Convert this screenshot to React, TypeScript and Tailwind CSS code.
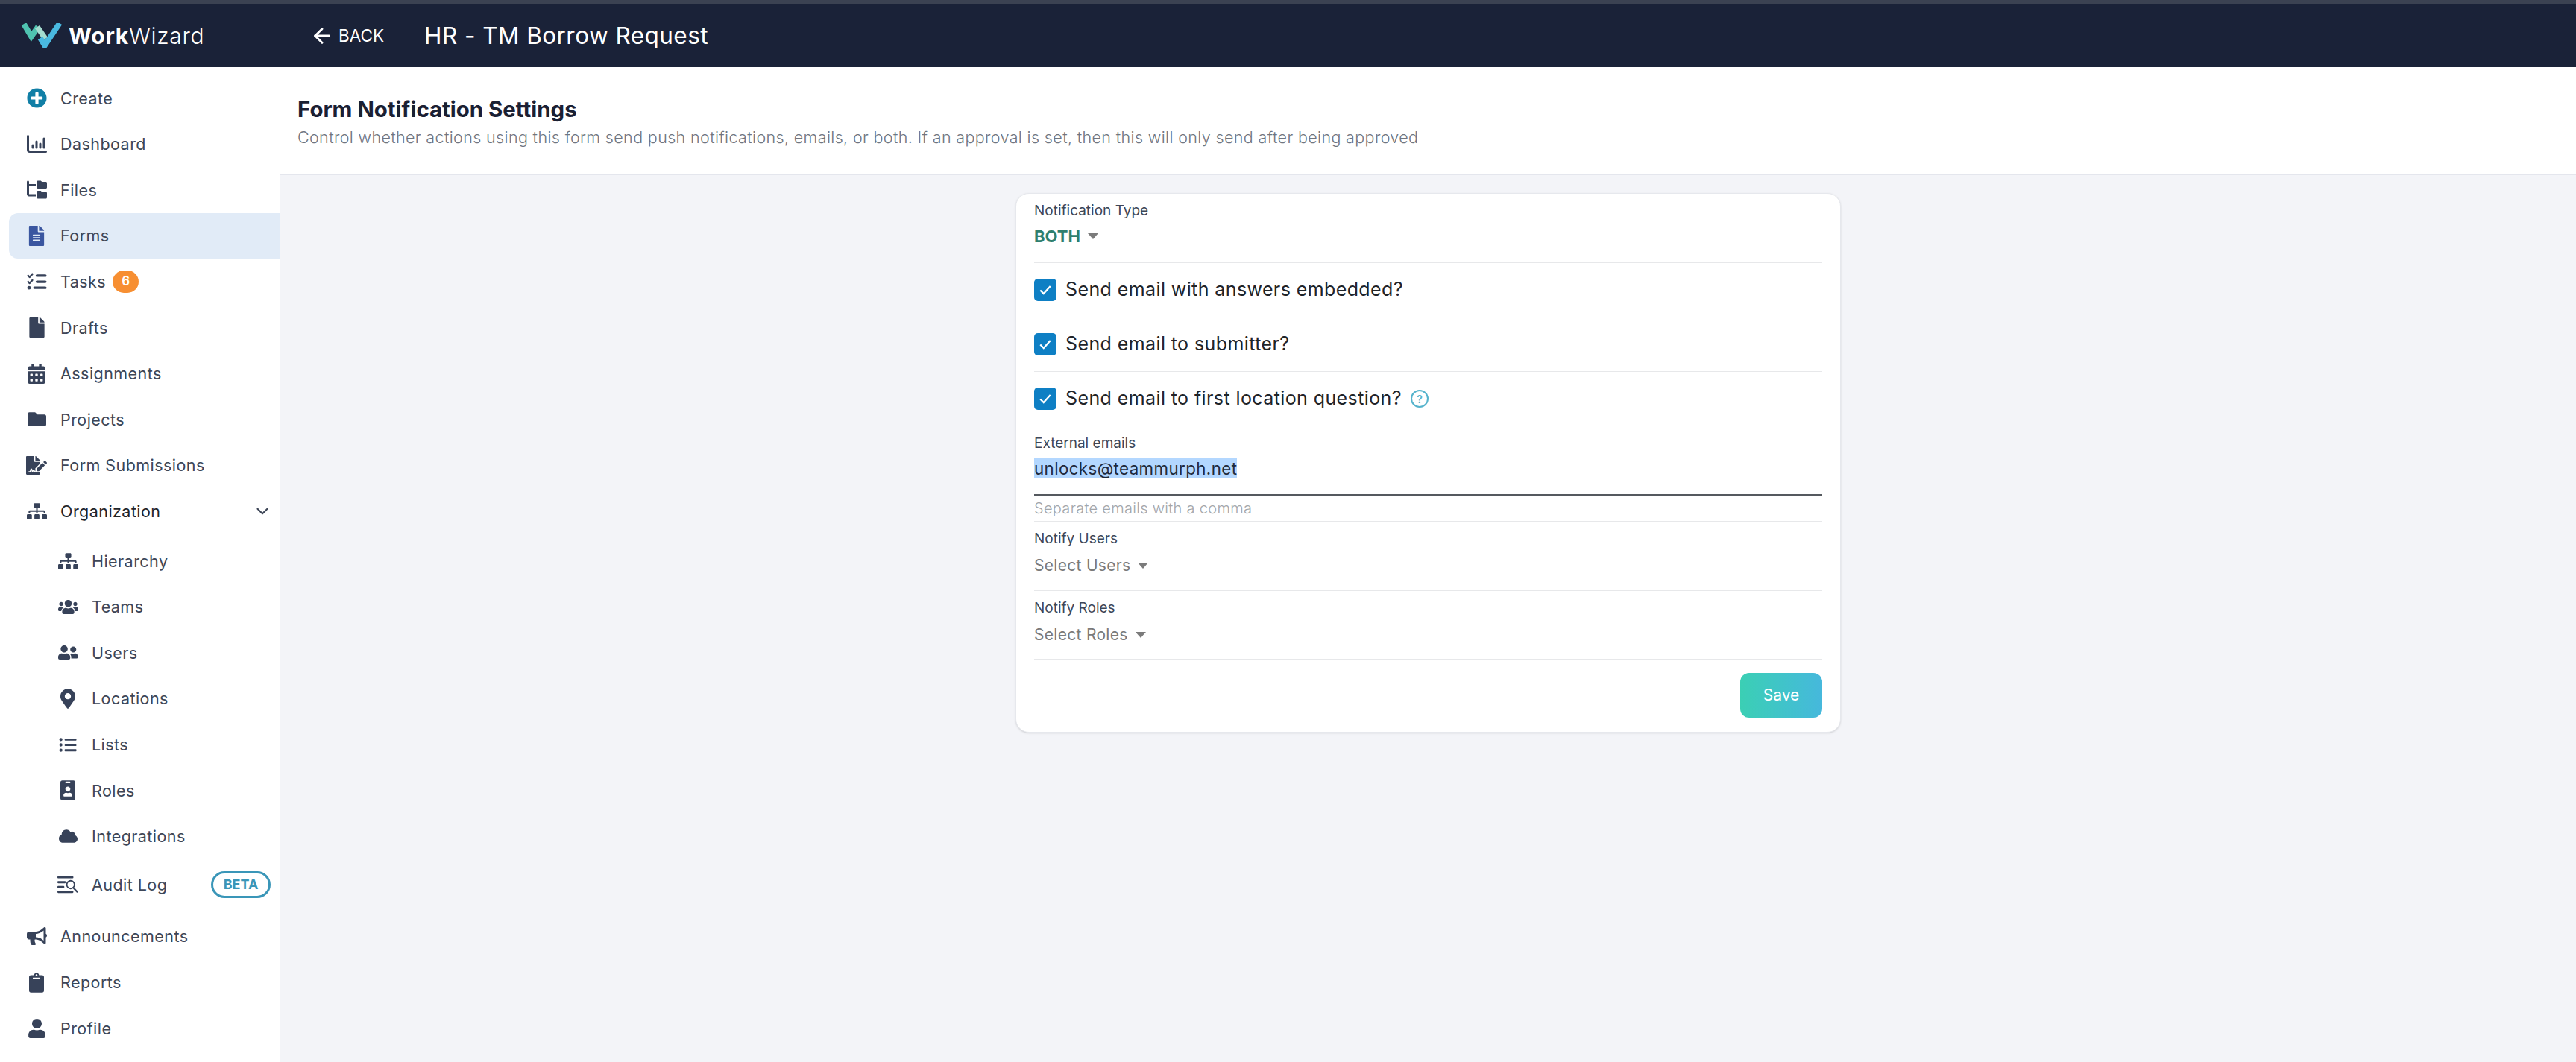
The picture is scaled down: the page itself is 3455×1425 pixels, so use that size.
import type { ReactNode } from "react";
import { ArrowLeft, ChevronDown } from "lucide-react";
import {
  FaBullhorn,
  FaCalendarAlt,
  FaClipboard,
  FaCloud,
  FaFile,
  FaFileAlt,
  FaFileSignature,
  FaFolder,
  FaIdBadge,
  FaListUl,
  FaMapMarkerAlt,
  FaPlusCircle,
  FaSitemap,
  FaUser,
  FaUserFriends,
  FaUsers,
} from "react-icons/fa";
import { FaFolderTree, FaListCheck } from "react-icons/fa6";

const font = "font-['Inter','Liberation_Sans',sans-serif]";

const ChartIcon = () => (
  <svg viewBox="0 0 27 24" className="w-[27px] h-[24px]" fill="none" stroke="#374259" strokeLinecap="round">
    <path d="M1.5 1.5 V20 Q1.5 22.5 4 22.5 H25.5" strokeWidth="3" />
    <path d="M8 14 V17" strokeWidth="3" />
    <path d="M13 9 V17" strokeWidth="3" />
    <path d="M18 12 V17" strokeWidth="3" />
    <path d="M23 5 V17" strokeWidth="3" />
  </svg>
);

const AuditIcon = () => (
  <svg viewBox="0 0 30 24" className="w-[30px] h-[24px]" fill="#374259">
    <rect x="0" y="0" width="23" height="3" rx="1.2" />
    <rect x="0" y="7" width="12" height="3" rx="1.2" />
    <rect x="0" y="14" width="10" height="3" rx="1.2" />
    <rect x="0" y="21" width="23" height="3" rx="1.2" />
    <circle cx="19" cy="12" r="5.6" fill="none" stroke="#374259" strokeWidth="2" />
    <path d="M23 16.5 L29 23" stroke="#374259" strokeWidth="2.4" />
  </svg>
);

const Logo = () => (
  <svg viewBox="0 0 56 34" className="w-[56px] h-[34px]" fill="none" strokeWidth="7.5">
    <path d="M4 1 L14 18 L23 5" stroke="#4fc3b0" />
    <path d="M22 5 L33 21" stroke="#a5dccf" />
    <path d="M26 20 L32 30 L52 0" stroke="#49b9e0" />
  </svg>
);

const Row = ({
  icon,
  label,
  active,
  sub,
  right,
  className = "",
  text = "text-[#3d4657]",
}: {
  icon: ReactNode;
  label: string;
  active?: boolean;
  sub?: boolean;
  right?: ReactNode;
  className?: string;
  text?: string;
}) => (
  <div
    className={`flex items-center h-[61.6px] shrink-0 ${sub ? "pl-[77px]" : active ? "pl-[23px]" : "pl-[35px]"} ${active ? "bg-[#e1ebf7] rounded-l-xl ml-[12px]" : ""} ${className}`}
  >
    <div className="w-[28px] h-[28px] flex items-center justify-center text-[#374259] shrink-0">
      {icon}
    </div>
    <span className={`ml-[18px] text-[21.5px] tracking-[0.45px] ${text}`}>{label}</span>
    {right}
  </div>
);

const Caret = () => (
  <span className="ml-[10px] w-0 h-0 border-x-[7px] border-x-transparent border-t-[8px] border-t-[#7b7b7b]" />
);

const CheckRow = ({ label, help }: { label: string; help?: boolean }) => (
  <div className="h-[73px] flex items-center border-b border-[#e7e8ea]">
    <div className="w-[30px] h-[30px] rounded-[5px] bg-[#0e7fc4] flex items-center justify-center">
      <svg viewBox="0 0 16 16" className="w-[18px] h-[18px]" fill="none" stroke="#fff" strokeWidth="2">
        <path d="M2 8.5 L6 12.5 L14 3.5" />
      </svg>
    </div>
    <span className="ml-[12px] text-[25px] text-[#1f2429] tracking-[0.4px]">{label}</span>
    {help && (
      <span className="ml-[12px] w-[24px] h-[24px] rounded-full border-2 border-[#55b3cc] text-[#55b3cc] text-[14px] font-semibold flex items-center justify-center">
        ?
      </span>
    )}
  </div>
);

const SelectField = ({ label, placeholder, h }: { label: string; placeholder: string; h: string }) => (
  <div className={`${h} border-b border-[#e7e8ea] pt-[10px]`}>
    <div className="text-[19px] leading-[26px] text-[#3d4657]">{label}</div>
    <div className="mt-[8px] flex items-center text-[21px] leading-[30px] text-[#7a7a7a] tracking-[0.3px]">
      {placeholder}
      <Caret />
    </div>
  </div>
);

const App = () => {
  return (
    <div className={`w-[3455px] h-[1425px] flex flex-col overflow-hidden bg-[#f3f4f8] ${font}`}>
      {/* Top bar */}
      <header className="h-[90px] shrink-0 bg-[#1a2238] border-t-[6px] border-[#3b4252] flex items-center text-white">
        <div className="w-[376px] shrink-0 pl-[28px] flex items-center">
          <Logo />
          <span className="ml-[8px] text-[30px] tracking-[0.7px]">
            <span className="font-bold">Work</span>
            <span className="font-light">Wizard</span>
          </span>
        </div>
        <div className="ml-[40px] flex items-center">
          <ArrowLeft className="w-[32px] h-[32px]" strokeWidth={2.2} />
          <span className="ml-[6px] text-[22.5px]">BACK</span>
          <span className="ml-[54px] text-[31.5px] font-normal tracking-[0.45px]">HR - TM Borrow Request</span>
        </div>
      </header>

      <div className="flex flex-1 min-h-0">
        {/* Sidebar */}
        <aside className="w-[376px] shrink-0 bg-white border-r border-[#e8eaef] pt-[11px] flex flex-col">
          <Row icon={<FaPlusCircle className="w-[27px] h-[27px] text-[#117fa6]" />} label="Create" />
          <Row icon={<ChartIcon />} label="Dashboard" />
          <Row icon={<FaFolderTree className="w-[27px] h-[27px]" />} label="Files" />
          <Row active icon={<FaFileAlt className="w-[24px] h-[27px] text-[#3a56a0]" />} label="Forms" />
          <Row
            icon={<FaListCheck className="w-[27px] h-[26px]" />}
            label="Tasks"
            right={
              <span className="ml-[9px] w-[35px] h-[30px] rounded-full bg-[#f78f32] text-white text-[17px] font-semibold flex items-center justify-center">
                6
              </span>
            }
          />
          <Row icon={<FaFile className="w-[21px] h-[27px]" />} label="Drafts" />
          <Row icon={<FaCalendarAlt className="w-[24px] h-[27px]" />} label="Assignments" />
          <Row icon={<FaFolder className="w-[27px] h-[25px]" />} label="Projects" />
          <Row icon={<FaFileSignature className="w-[28px] h-[25px]" />} label="Form Submissions" />
          <Row
            icon={<FaSitemap className="w-[27px] h-[22px]" />}
            label="Organization"
            text="text-[#1f2429]"
            className="justify-start relative mb-[5px]"
            right={<ChevronDown className="absolute right-[10px] w-[26px] h-[26px] text-[#3d4657]" strokeWidth={2} />}
          />
          <Row sub icon={<FaSitemap className="w-[27px] h-[22px]" />} label="Hierarchy" />
          <Row sub icon={<FaUsers className="w-[27px] h-[23px]" />} label="Teams" />
          <Row sub icon={<FaUserFriends className="w-[27px] h-[23px]" />} label="Users" />
          <Row sub icon={<FaMapMarkerAlt className="w-[20px] h-[27px]" />} label="Locations" />
          <Row sub icon={<FaListUl className="w-[26px] h-[23px]" />} label="Lists" />
          <Row sub icon={<FaIdBadge className="w-[20px] h-[27px]" />} label="Roles" />
          <Row sub icon={<FaCloud className="w-[27px] h-[20px]" />} label="Integrations" />
          <Row
            sub
            icon={<AuditIcon />}
            label="Audit Log"
            className="relative mb-[8px] mt-[3px]"
            right={
              <span className="absolute right-[12px] w-[80px] h-[36px] rounded-full border-[3px] border-[#3a96b8] text-[#3a96b8] text-[18px] font-bold flex items-center justify-center">
                BETA
              </span>
            }
          />
          <Row icon={<FaBullhorn className="w-[27px] h-[26px]" />} label="Announcements" />
          <Row icon={<FaClipboard className="w-[20px] h-[27px]" />} label="Reports" />
          <Row icon={<FaUser className="w-[23px] h-[26px]" />} label="Profile" />
        </aside>

        {/* Main */}
        <main className="flex-1 min-w-0">
          <div className="h-[145px] bg-white border-b border-[#e4e6ed] pl-[23px] pt-[40px]">
            <h1 className="text-[29.4px] leading-[34px] font-bold text-[#1a2033]">Form Notification Settings</h1>
            <p className="mt-[5px] text-[21.5px] leading-[30px] font-light tracking-[0.36px] text-[#6f7580]">
              Control whether actions using this form send push notifications, emails, or both. If an approval is set,
              then this will only send after being approved
            </p>
          </div>

          <div className="pt-[24px] flex justify-center">
            <div className="w-[1107px] h-[724px] bg-white rounded-[18px] border border-[#e6e8ed] shadow-sm px-[24px]">
              <div className="h-[93px] border-b border-[#e7e8ea] pt-[10px]">
                <div className="text-[19px] leading-[26px] text-[#3d4657]">Notification Type</div>
                <div className="mt-[6px] flex items-center text-[22px] leading-[30px] font-bold text-[#2f7f6f]">
                  BOTH
                  <Caret />
                </div>
              </div>
              <CheckRow label="Send email with answers embedded?" />
              <CheckRow label="Send email to submitter?" />
              <CheckRow label="Send email to first location question?" help />
              <div className="h-[128px] border-b border-[#e7e8ea] pt-[10px]">
                <div className="text-[19px] leading-[26px] text-[#3d4657]">External emails</div>
                <div className="mt-[7px] h-[50px] border-b-2 border-[#55595f] text-[22.3px] leading-[28px] text-[#1f2a3c]">
                  <span className="bg-[#b3d7ff] tracking-[0.4px]">unlocks@teammurph.net</span>
                </div>
                <div className="mt-[4px] text-[20px] leading-[26px] tracking-[0.3px] text-[#a3a6aa] font-light">
                  Separate emails with a comma
                </div>
              </div>
              <SelectField label="Notify Users" placeholder="Select Users" h="h-[93px]" />
              <SelectField label="Notify Roles" placeholder="Select Roles" h="h-[92px]" />
              <div className="flex justify-end pt-[18px]">
                <button className="w-[110px] h-[60px] rounded-[12px] bg-linear-to-r from-[#3bcfb4] to-[#46b8dc] text-white text-[21px]">
                  Save
                </button>
              </div>
            </div>
          </div>
        </main>
      </div>
    </div>
  );
};

export default App;
